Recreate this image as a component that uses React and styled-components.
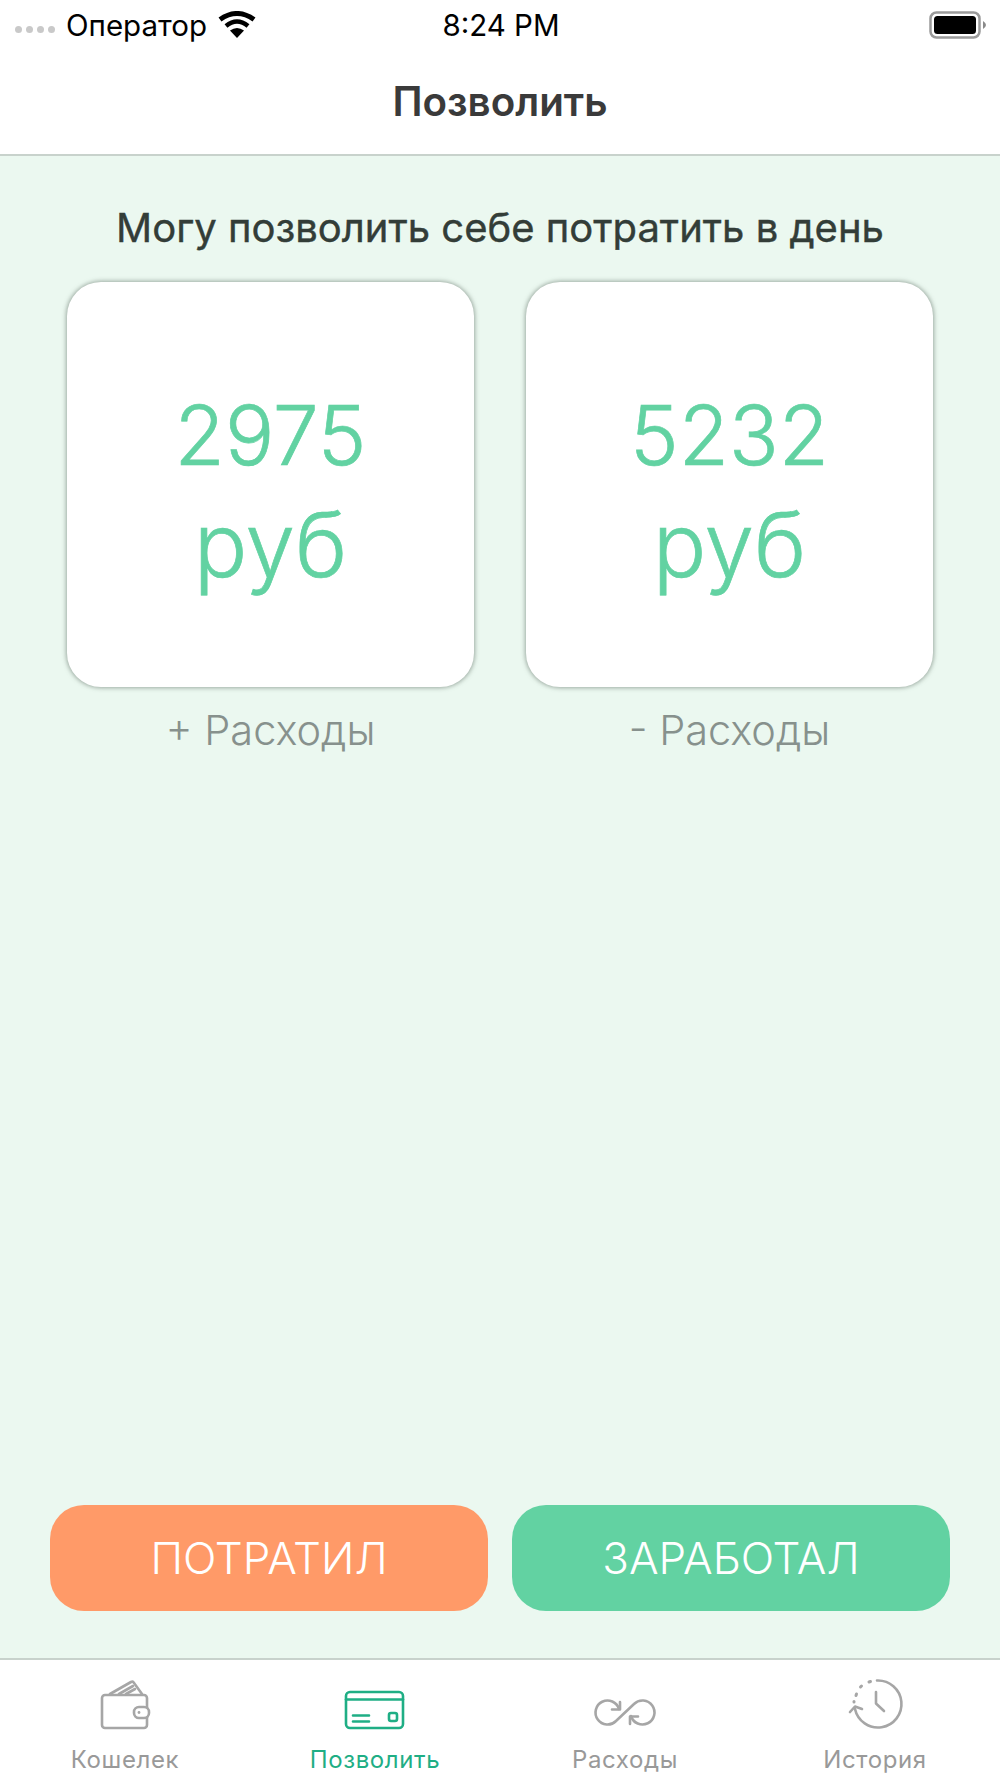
import styled, { createGlobalStyle } from "styled-components";

const GlobalStyle = createGlobalStyle`
  html, body {
    margin: 0;
    padding: 0;
    background: #fff;
    font-family: Inter, "Noto Sans", sans-serif;
  }
`;

const Screen = styled.div`
  width: 1000px;
  height: 1778px;
  display: flex;
  flex-direction: column;
  overflow: hidden;
`;

const StatusBar = styled.div`
  height: 50px;
  display: grid;
  grid-template-columns: 1fr auto 1fr;
  align-items: center;
  padding: 0 13px 0 15px;
  color: #000;
  font-size: 29.5px;
`;

const StatusLeft = styled.div`
  display: flex;
  align-items: center;
`;

const Signal = styled.div`
  display: flex;
  gap: 4px;
  margin: 8px 11px 0 0;
`;

const SignalDot = styled.span`
  width: 7px;
  height: 7px;
  border-radius: 50%;
  background: #c9c9c9;
`;

const Carrier = styled.span`
  margin-right: 11px;
`;

const StatusRight = styled.div`
  display: flex;
  justify-content: flex-end;
`;

const Header = styled.header`
  height: 106px;
  display: flex;
  align-items: center;
  justify-content: center;
  border-bottom: 2px solid #c8d2cc;
  padding-bottom: 2px;
  box-sizing: border-box;
  font-size: 40.3px;
  font-weight: 600;
  color: #3a3a3a;
`;

const Main = styled.main`
  flex: 1;
  display: flex;
  flex-direction: column;
  background: #ebf8f0;
  padding-top: 48px;
`;

const Heading = styled.h2`
  margin: 0;
  text-align: center;
  font-size: 40px;
  line-height: 48px;
  font-weight: 400;
  -webkit-text-stroke: 0.4px #333d38;
  color: #333d38;
`;

const Cards = styled.div`
  display: flex;
  justify-content: center;
  gap: 52px;
  margin-top: 30px;
`;

const CardColumn = styled.div`
  width: 407px;
  display: flex;
  flex-direction: column;
  align-items: center;
`;

const Card = styled.div`
  width: 100%;
  height: 405px;
  box-sizing: border-box;
  padding-top: 15px;
  background: #fff;
  border-radius: 34px;
  box-shadow: 0 0 4px 1px rgba(90, 105, 95, 0.55);
  display: flex;
  flex-direction: column;
  align-items: center;
  justify-content: center;
  color: #62d2a2;
  font-weight: 300;
  -webkit-text-stroke: 0.7px #62d2a2;
`;

const Amount = styled.div`
  font-size: 82px;
  line-height: 106px;
`;

const Unit = styled.div`
  font-size: 89px;
  line-height: 112px;
`;

const Caption = styled.div`
  margin-top: 19px;
  font-size: 41.5px;
  line-height: 48px;
  font-weight: 300;
  color: #87918d;
`;

const Actions = styled.div`
  margin-top: auto;
  padding: 0 50px 47px;
  display: flex;
  gap: 24px;
`;

const ActionButton = styled.button`
  flex: 1;
  height: 106px;
  border: 0;
  border-radius: 34px;
  background: ${(props) => props.$bg};
  color: #fff;
  font-family: inherit;
  font-size: 44px;
  font-weight: 300;
`;

const TabBar = styled.nav`
  height: 120px;
  box-sizing: border-box;
  border-top: 2px solid #c8d2cc;
  display: grid;
  grid-template-columns: repeat(4, 1fr);
  background: #fff;
`;

const Tab = styled.div`
  display: flex;
  flex-direction: column;
  align-items: center;
  padding-top: 18px;
  color: ${(props) => (props.$active ? "#1fae85" : "#999")};
`;

const TabLabel = styled.span`
  margin-top: 13px;
  font-size: 24px;
  line-height: 30px;
  letter-spacing: 0.6px;
`;

const WifiIcon = () => (
  <svg width="38" height="28" viewBox="0 0 38 28">
    <path d="M19 27 L12 19.5 Q19 14.5 26 19.5 Z" fill="#000" />
    <path d="M8 15 Q19 6 30 15" fill="none" stroke="#000" strokeWidth="4.5" />
    <path d="M2 8.5 Q19 -3.5 36 8.5" fill="none" stroke="#000" strokeWidth="5" />
  </svg>
);

const BatteryIcon = () => (
  <svg width="58" height="28" viewBox="0 0 58 28">
    <rect x="1.5" y="1.5" width="49" height="25" rx="6" fill="none" stroke="#9a9a9a" strokeWidth="2.5" />
    <rect x="5" y="5" width="42" height="18" rx="3.5" fill="#000" />
    <path d="M54 10 Q57 12 57 14 Q57 16 54 18 Z" fill="#8a8a8a" />
  </svg>
);

const WalletIcon = () => (
  <svg width="64" height="54" viewBox="0 0 64 54" fill="none" stroke="#a6a6a6" strokeWidth="2.6" strokeLinecap="round" strokeLinejoin="round">
    <rect x="9" y="17" width="45" height="33" rx="3" />
    <path d="M17 16 L38 4 Q40 3 41 5 L49 16" />
    <path d="M26 16 L40 8 M33 16 L42 11" />
    <rect x="41" y="29" width="15" height="11" rx="5" fill="#fff" />
    <circle cx="46" cy="34.5" r="1.4" fill="#a6a6a6" stroke="none" />
  </svg>
);

const CardIcon = () => (
  <svg width="64" height="54" viewBox="0 0 64 54" fill="none" stroke="currentColor" strokeWidth="2.6" strokeLinecap="round" strokeLinejoin="round">
    <rect x="3" y="14" width="57" height="36" rx="4" />
    <path d="M3 21.5 H60" />
    <path d="M10 37.5 H26 M10 43.5 H26" />
    <rect x="46" y="35" width="8" height="8" rx="2" />
  </svg>
);

const LoopIcon = () => (
  <svg width="64" height="54" viewBox="0 0 64 54" fill="none" stroke="#a6a6a6" strokeWidth="2.6" strokeLinecap="round" strokeLinejoin="round">
    <path d="M26 31 A12 12 0 1 0 23 43 L41 26 A12 12 0 1 1 38 38" />
    <path d="M27 24 V31.5 H19" />
    <path d="M37 46 V38.5 H45" />
  </svg>
);

const HistoryIcon = () => (
  <svg width="64" height="54" viewBox="0 0 64 54" fill="none" stroke="#a6a6a6" strokeWidth="2.6" strokeLinecap="round" strokeLinejoin="round">
    <path d="M34 2.5 A23.5 23.5 0 1 1 12 31" />
    <path d="M26 4 L27.5 3.5 M17.5 9 L18.5 8 M13 17.5 L13.5 16 M11 24 L11 23.5" strokeWidth="3" />
    <path d="M7 34 L12 28.5 L19 31" />
    <path d="M33 14 V25.5 L41 33" />
  </svg>
);

const tabs = [
  { label: "Кошелек", Icon: WalletIcon },
  { label: "Позволить", Icon: CardIcon, active: true },
  { label: "Расходы", Icon: LoopIcon },
  { label: "История", Icon: HistoryIcon },
];

const cards = [
  { amount: "2975", caption: "+ Расходы" },
  { amount: "5232", caption: "- Расходы" },
];

export default function App() {
  return (
    <Screen>
      <GlobalStyle />
      <StatusBar>
        <StatusLeft>
          <Signal>
            <SignalDot />
            <SignalDot />
            <SignalDot />
            <SignalDot />
          </Signal>
          <Carrier>Оператор</Carrier>
          <WifiIcon />
        </StatusLeft>
        <span>8:24 PM</span>
        <StatusRight>
          <BatteryIcon />
        </StatusRight>
      </StatusBar>
      <Header>Позволить</Header>
      <Main>
        <Heading>Могу позволить себе потратить в день</Heading>
        <Cards>
          {cards.map((card) => (
            <CardColumn key={card.caption}>
              <Card>
                <Amount>{card.amount}</Amount>
                <Unit>руб</Unit>
              </Card>
              <Caption>{card.caption}</Caption>
            </CardColumn>
          ))}
        </Cards>
        <Actions>
          <ActionButton $bg="#ff9a68">ПОТРАТИЛ</ActionButton>
          <ActionButton $bg="#62d2a2">ЗАРАБОТАЛ</ActionButton>
        </Actions>
      </Main>
      <TabBar>
        {tabs.map(({ label, Icon, active }) => (
          <Tab key={label} $active={active}>
            <Icon />
            <TabLabel>{label}</TabLabel>
          </Tab>
        ))}
      </TabBar>
    </Screen>
  );
}
